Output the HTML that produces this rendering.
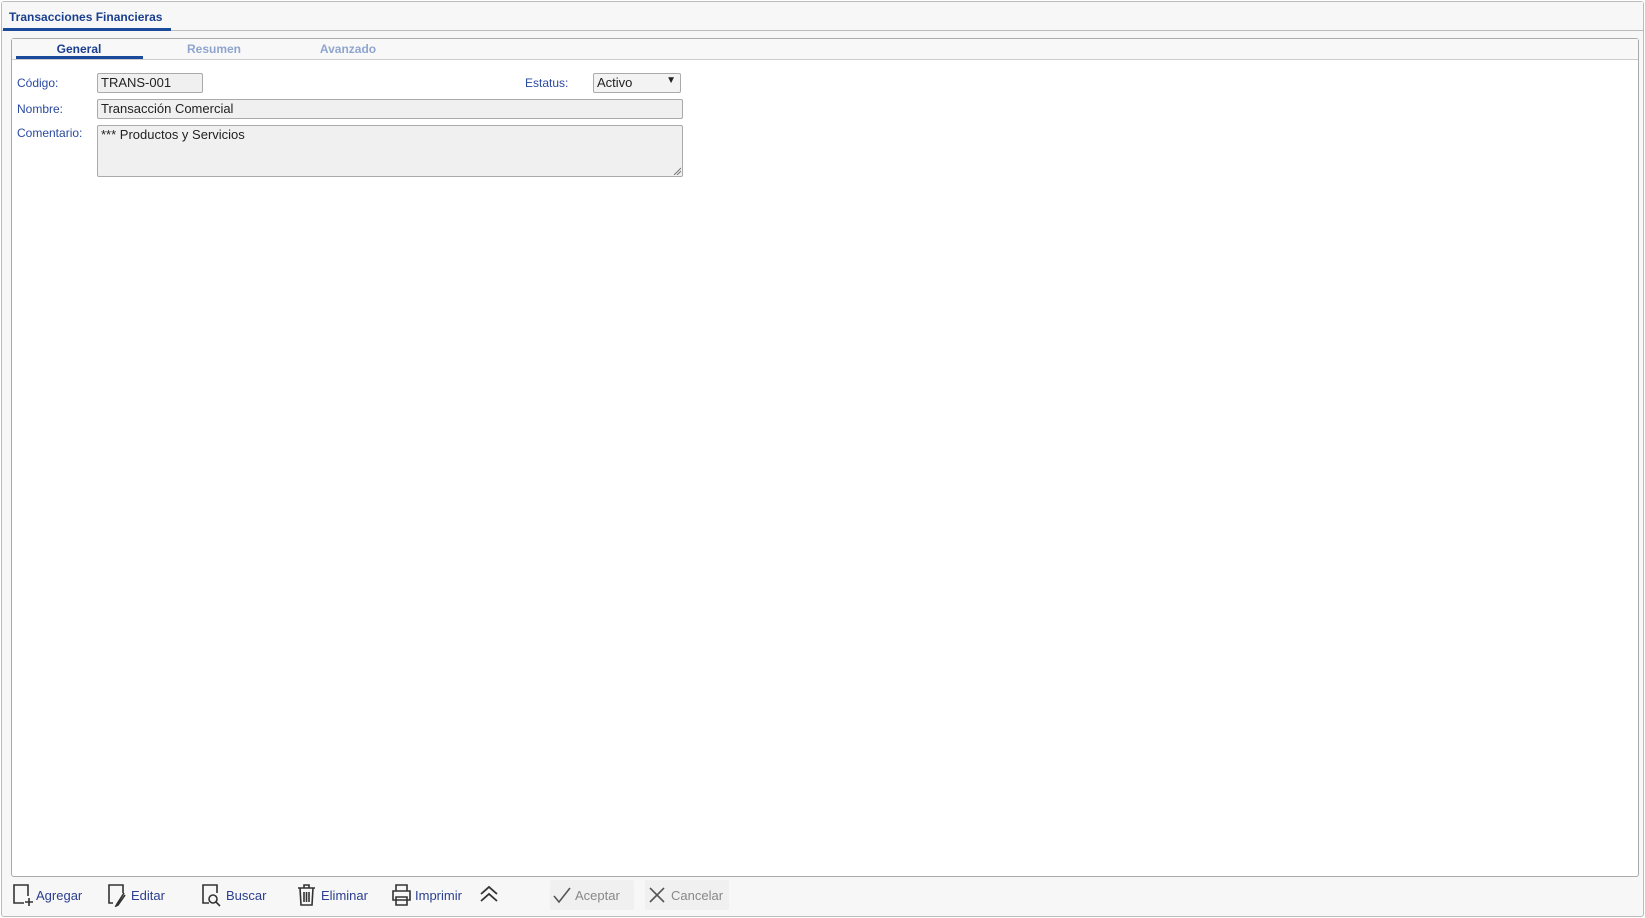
<!DOCTYPE html>
<html><head><meta charset="utf-8"><style>
*{box-sizing:border-box;margin:0;padding:0}
body{width:1645px;height:918px;background:#fff;font-family:"Liberation Sans",sans-serif;position:relative;overflow:hidden}
.a{position:absolute}
.outer{left:1px;top:1px;width:1643px;height:916px;border:1px solid #bbb;border-radius:3px;background:#f7f7f7}
.titlebar{left:2px;top:2px;width:1641px;height:29px;border-bottom:1px solid #bbb;background:#f7f7f7}
.title{left:9px;top:10px;font-size:12px;font-weight:bold;color:#1b3f8f}
.tul{left:3px;top:28px;width:168px;height:3px;background:#1b4a9b}
.panel{left:11px;top:38px;width:1628px;height:839px;border:1px solid #aaa;border-radius:3px;background:#fff}
.tabs{left:12px;top:39px;width:1626px;height:21px;border-bottom:1px solid #ccc;background:#f8f8f8}
.tab{top:42px;font-size:12px;font-weight:bold;color:#8fa5cf;transform:translateX(-50%)}
.lbl{font-size:12px;color:#2a4a9f}
.inp{border:1px solid #aaa;background:#f0f0f0;font-size:13px;color:#222;padding:1px 3px;border-radius:2px}
.tb{top:888px;font-size:13px;color:#2a3f8f}
.btn{top:880px;height:30px;width:84px;background:#f0f0f0;font-size:13px;color:#777;border-radius:2px}
</style></head><body>
<div class="a outer"></div>
<div class="a titlebar"></div>
<div class="a title">Transacciones Financieras</div>
<div class="a tul"></div>
<div class="a panel"></div>
<div class="a tabs"></div>
<div class="a tab" style="left:79px;color:#1b3f8f">General</div>
<div class="a" style="left:16px;top:56px;width:127px;height:3px;background:#1b4a9b"></div>
<div class="a tab" style="left:214px">Resumen</div>
<div class="a tab" style="left:348px">Avanzado</div>

<div class="a lbl" style="left:17px;top:76px">Código:</div>
<div class="a inp" style="left:97px;top:73px;width:106px;height:20px">TRANS-001</div>
<div class="a lbl" style="left:525px;top:76px">Estatus:</div>
<div class="a inp" style="left:593px;top:73px;width:88px;height:20px;background:#f3f3f3">Activo<span style="position:absolute;right:4px;top:1px;font-size:10px">▼</span></div>
<div class="a lbl" style="left:17px;top:102px">Nombre:</div>
<div class="a inp" style="left:97px;top:99px;width:586px;height:20px">Transacción Comercial</div>
<div class="a lbl" style="left:17px;top:126px">Comentario:</div>
<div class="a inp" style="left:97px;top:125px;width:586px;height:52px">*** Productos y Servicios</div>
<svg class="a" style="left:673px;top:167px" width="8" height="8" viewBox="0 0 8 8" stroke="#777" stroke-width="1"><path d="M1 8L8 1M4 8L8 4"/></svg>

<svg class="a" style="left:12px;top:883px" width="22" height="24" viewBox="0 0 22 24" fill="none" stroke="#333" stroke-width="1.6"><path d="M12 20H2V2h14v11"/><path d="M17 15v8M13 19h8"/></svg>
<div class="a tb" style="left:36px">Agregar</div>
<svg class="a" style="left:107px;top:883px" width="22" height="24" viewBox="0 0 22 24" fill="none" stroke="#333" stroke-width="1.6"><path d="M6 20H2V2h14v8"/><path d="M17 10l-7 11-1 2 2-1 7-10"/></svg>
<div class="a tb" style="left:131px">Editar</div>
<svg class="a" style="left:201px;top:883px" width="22" height="24" viewBox="0 0 22 24" fill="none" stroke="#333" stroke-width="1.6"><path d="M8 20H2V2h14v8"/><circle cx="12" cy="16" r="4"/><path d="M15 19l4 4"/></svg>
<div class="a tb" style="left:226px">Buscar</div>
<svg class="a" style="left:296px;top:883px" width="22" height="24" viewBox="0 0 22 24" fill="none" stroke="#333" stroke-width="1.6"><path d="M2 5h17M8 5V2h5v3M4 5l1 17h11l1-17M8 9v10M10.5 9v10M13 9v10"/></svg>
<div class="a tb" style="left:321px">Eliminar</div>
<svg class="a" style="left:391px;top:883px" width="22" height="24" viewBox="0 0 22 24" fill="none" stroke="#333" stroke-width="1.6"><path d="M5 8V2h11v6M2 8h17v9H2zM5 14h11v8H5z"/></svg>
<div class="a tb" style="left:415px">Imprimir</div>
<svg class="a" style="left:478px;top:885px" width="22" height="18" viewBox="0 0 22 18" fill="none" stroke="#333" stroke-width="1.8"><path d="M3 9l8-7 8 7M3 16l8-7 8 7"/></svg>
<div class="a btn" style="left:550px"></div>
<svg class="a" style="left:553px;top:886px" width="18" height="18" viewBox="0 0 18 18" fill="none" stroke="#555" stroke-width="1.6"><path d="M1 10l5 6L17 2"/></svg>
<div class="a tb" style="left:575px;color:#888">Aceptar</div>
<div class="a btn" style="left:645px"></div>
<svg class="a" style="left:648px;top:886px" width="18" height="18" viewBox="0 0 18 18" fill="none" stroke="#555" stroke-width="1.6"><path d="M2 2l14 14M16 2L2 16"/></svg>
<div class="a tb" style="left:671px;color:#888">Cancelar</div>
</body></html>
